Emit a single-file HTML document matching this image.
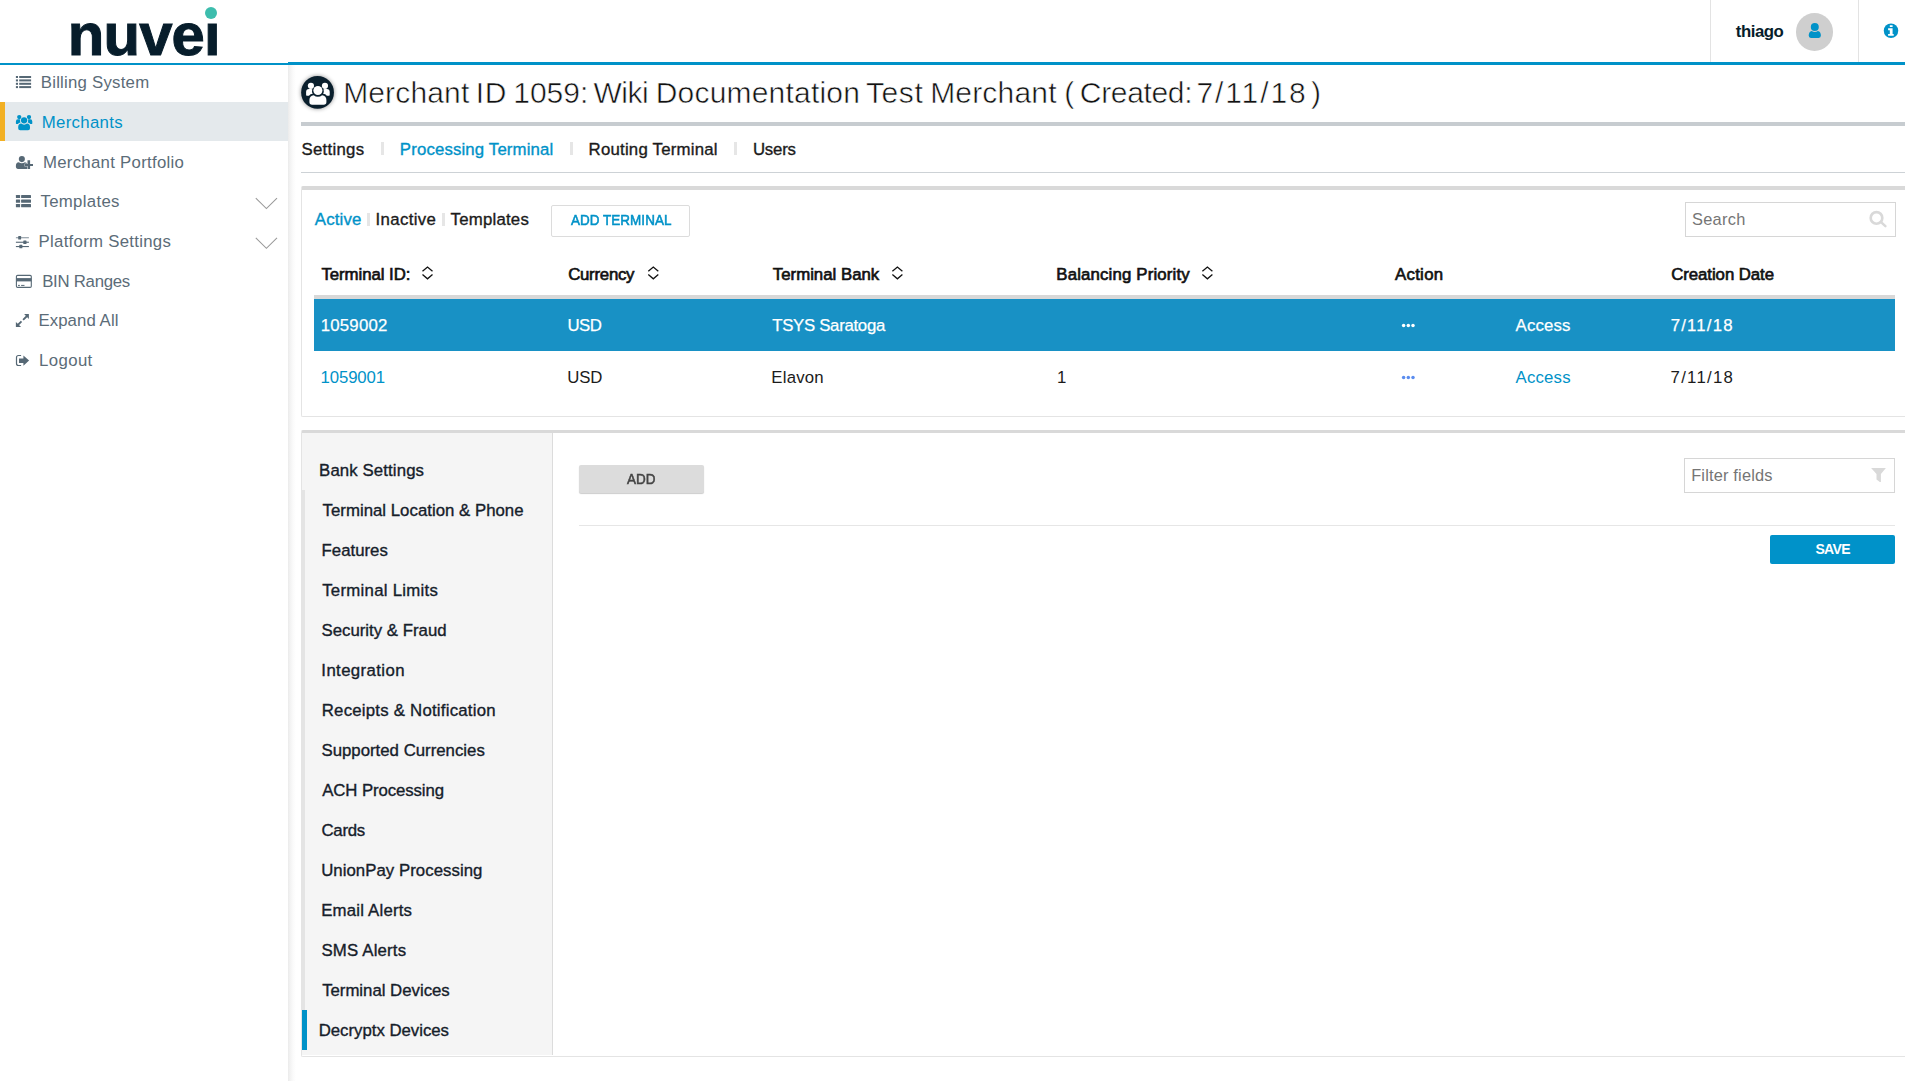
<!DOCTYPE html>
<html lang="en">
<head>
<meta charset="utf-8">
<title>Merchant ID 1059 - Processing Terminal</title>
<style>
*{box-sizing:border-box;margin:0;padding:0}
html,body{width:1905px;height:1081px;overflow:hidden;background:#fff}
body{font-family:"Liberation Sans",Arial,sans-serif;color:#1b1b1b;position:relative}
h1{font:inherit}
a{color:inherit;text-decoration:none}
.abs{position:absolute}
.t{position:absolute;white-space:nowrap;height:24px;line-height:24px}
svg{position:absolute;display:block;overflow:visible}

/* ---------- header ---------- */
#hdr-line-l{left:0;top:63px;width:288px;height:2px;background:#0092c8}
#hdr-line-r{left:288px;top:62px;width:1617px;height:3px;background:#0092c8}
#logo{left:67.8px;top:-0.5px;height:70px;line-height:70px;font-size:59.8px;font-weight:700;color:#071d2b;letter-spacing:-.85px;-webkit-text-stroke:1px #071d2b}
#logo-mask{left:203px;top:2px;width:18px;height:18.500px;background:#fff}
#logo-dot{left:205.3px;top:6.6px;width:12px;height:12px;border-radius:50%;background:#3dbdad}
.vsep{top:0;width:1px;height:62px;background:#e3e3e3}
.un{font-size:16.8px;font-weight:700;color:#071d2b}
#avatar{left:1796px;top:12.900px;width:37.2px;height:37.8px;border-radius:50%;background:#cfcfcf}

/* ---------- sidebar ---------- */
#side-shadow{left:288px;top:65px;width:8px;height:1016px;background:linear-gradient(90deg,#ebebeb 0,#f3f3f3 28%,#fbfbfb 65%,#fff 100%)}
#side-active{left:0;top:102px;width:288px;height:39px;background:#e4e9ec}
#side-bar{left:0;top:102px;width:5px;height:39px;background:#f2b024}
.sm{font-size:16.8px;color:#5b6c78}
.sm.on{color:#0092c8}

/* ---------- main ---------- */
.title{height:40px;line-height:40px;font-size:30px;color:#111;-webkit-text-stroke:.55px #fff}
#title-line{left:301px;top:122px;width:1604px;height:3.5px;background:#c7ccd0}
.tab{font-size:16.8px;color:#1b1b1b;-webkit-text-stroke:.35px currentColor}
.sep{width:3px;height:13px;background:#e6e6e6}
#tab-line{left:301px;top:172px;width:1604px;height:1px;background:#cdd2d6}

.panel{border:1px solid #e4e4e4;border-top:3px solid #d9d9d9;border-right:0;background:#fff;border-radius:2px 0 0 2px}
#p1{left:301px;top:186px;width:1604px;height:231px;border-top-width:4px}
#p2{left:301px;top:430px;width:1604px;height:627px}

/* ---------- panel 1 ---------- */
#addterm{left:551px;top:205px;width:139px;height:31.500px;border:1px solid #dcdcdc;border-radius:2px;background:#fff}
.btn-t{font-size:14.8px;-webkit-text-stroke:.55px currentColor;transform:scaleX(.91);transform-origin:0 50%}
#search{left:1685px;top:202px;width:211px;height:35px;border:1px solid #d6d6d6;background:#fff}
.ph{font-size:16.4px;color:#757575}
.th{font-size:16.8px;color:#111;-webkit-text-stroke:.65px currentColor}
#th-line{left:314px;top:295px;width:1581px;height:4px;background:#d8d8d8}
#row-sel{left:314px;top:299px;width:1581px;height:51.500px;background:#1891c5}
.td{font-size:16.8px;color:#1b1b1b}
.tdw{font-size:16.8px;color:#fff;-webkit-text-stroke:.25px currentColor}

/* ---------- panel 2 ---------- */
#sub-bg{left:302px;top:433px;width:250px;height:622px;background:#f5f5f5}
#sub-border{left:552px;top:433px;width:1px;height:622px;background:#dcdcdc}
#sub-strip{left:302px;top:490px;width:3px;height:520px;background:#e4e4e4}
#sub-on{left:302px;top:1010px;width:5px;height:40px;background:#0092c8}
.sub{font-size:16.8px;color:#15202a;-webkit-text-stroke:.35px currentColor}
#add{left:579px;top:465px;width:125px;height:28px;background:#dcdcdc;border-radius:2px;box-shadow:0 1px 1px rgba(0,0,0,.2)}
#filter{left:1684px;top:458px;width:211px;height:35px;border:1px solid #d6d6d6;background:#fff}
#hr{left:579px;top:525px;width:1316px;height:1px;background:#e6e6e6}
#save{left:1770px;top:535px;width:125px;height:29px;background:#0092c9;border-radius:2px}
.save-t{font-size:14px;font-weight:700;color:#fff}
.blue{color:#0092c8}
.w{color:#fff}
</style>
</head>
<body>
<!-- header -->
<div class="abs" id="hdr-line-l"></div>
<div class="abs" id="hdr-line-r"></div>
<div class="t" id="logo">nuvei</div>
<div class="abs" id="logo-mask"></div>
<div class="abs" id="logo-dot"></div>
<div class="abs vsep" style="left:1710px"></div>
<div class="abs vsep" style="left:1858px"></div>
<div class="abs" id="avatar"></div>
<!-- sidebar -->
<div class="abs" id="side-shadow"></div>
<div class="abs" id="side-active"></div>
<div class="abs" id="side-bar"></div>
<!-- main -->
<div class="abs" id="title-line"></div>
<div class="abs sep" style="left:381px;top:142.3px"></div>
<div class="abs sep" style="left:570px;top:142.3px"></div>
<div class="abs sep" style="left:733.6px;top:142.3px"></div>
<div class="abs" id="tab-line"></div>
<div class="abs panel" id="p1"></div>
<div class="abs panel" id="p2"></div>
<div class="abs sep" style="left:367px;top:212.5px"></div>
<div class="abs sep" style="left:442px;top:212.5px"></div>
<div class="abs" id="addterm"></div>
<div class="abs" id="search"></div>
<div class="abs" id="th-line"></div>
<div class="abs" id="row-sel"></div>
<div class="abs" id="sub-bg"></div>
<div class="abs" id="sub-border"></div>
<div class="abs" id="sub-strip"></div>
<div class="abs" id="sub-on"></div>
<div class="abs" id="add"></div>
<div class="abs" id="filter"></div>
<div class="abs" id="hr"></div>
<div class="abs" id="save"></div>

<!-- text -->
<header id="topbar">
<span class="t un" style="left:1735.80px;top:19.75px;letter-spacing:-0.459px">thiago</span>
</header>
<nav id="sidebar">
<a class="t sm" style="left:40.77px;top:70.75px;letter-spacing:0.229px">Billing System</a>
<a class="t sm on" style="left:41.83px;top:110.75px;letter-spacing:0.296px">Merchants</a>
<a class="t sm" style="left:42.94px;top:150.75px;letter-spacing:0.285px">Merchant Portfolio</a>
<a class="t sm" style="left:40.43px;top:189.75px;letter-spacing:0.324px">Templates</a>
<a class="t sm" style="left:38.61px;top:229.75px;letter-spacing:0.274px">Platform Settings</a>
<a class="t sm" style="left:42.14px;top:269.75px;letter-spacing:-0.261px">BIN Ranges</a>
<a class="t sm" style="left:38.43px;top:308.75px;letter-spacing:0.078px">Expand All</a>
<a class="t sm" style="left:39.11px;top:348.75px;letter-spacing:0.370px">Logout</a>
</nav>
<main id="content">
<h1 id="page-title">
<span class="t title" style="left:343.13px;top:72.75px;letter-spacing:0.153px">Merchant</span>
<span class="t title" style="left:475.64px;top:72.75px;letter-spacing:0.674px">ID</span>
<span class="t title" style="left:513.19px;top:72.75px;letter-spacing:0.018px">1059:</span>
<span class="t title" style="left:593.38px;top:72.75px;letter-spacing:-0.482px">Wiki</span>
<span class="t title" style="left:655.68px;top:72.75px;letter-spacing:0.206px">Documentation</span>
<span class="t title" style="left:865.94px;top:72.75px;letter-spacing:0.601px">Test</span>
<span class="t title" style="left:930.13px;top:72.75px;letter-spacing:0.185px">Merchant</span>
<span class="t title" style="left:1064.13px;top:72.75px;letter-spacing:0.100px">(</span>
<span class="t title" style="left:1079.84px;top:72.75px;letter-spacing:-0.342px">Created:</span>
<span class="t title" style="left:1196.51px;top:72.75px;letter-spacing:1.879px">7/11/18</span>
<span class="t title" style="left:1311.04px;top:72.75px;letter-spacing:0.100px">)</span>
</h1>
<nav id="merchant-tabs">
<a class="t tab" style="left:301.51px;top:137.75px;letter-spacing:0.280px">Settings</a>
<a class="t tab blue" style="left:399.82px;top:137.75px;letter-spacing:0.151px">Processing Terminal</a>
<a class="t tab" style="left:588.55px;top:137.75px;letter-spacing:0.225px">Routing Terminal</a>
<a class="t tab" style="left:752.94px;top:137.75px;letter-spacing:-0.189px">Users</a>
</nav>
<section id="terminals">
<a class="t tab blue" style="left:314.79px;top:207.75px;letter-spacing:0.185px">Active</a>
<a class="t tab" style="left:375.61px;top:207.75px;letter-spacing:0.330px">Inactive</a>
<a class="t tab" style="left:450.53px;top:207.75px;letter-spacing:0.223px">Templates</a>
<a class="t btn-t blue" style="left:570.59px;top:208.25px;letter-spacing:0.041px">ADD TERMINAL</a>
<span class="t ph" style="left:1691.96px;top:207.25px;letter-spacing:0.298px">Search</span>
<div class="t th" style="left:321.44px;top:262.75px;letter-spacing:-0.050px">Terminal ID:</div>
<div class="t th" style="left:568.17px;top:262.75px;letter-spacing:-0.247px">Currency</div>
<div class="t th" style="left:772.82px;top:262.75px;letter-spacing:0.006px">Terminal Bank</div>
<div class="t th" style="left:1056.27px;top:262.75px;letter-spacing:0.170px">Balancing Priority</div>
<div class="t th" style="left:1394.95px;top:262.75px;letter-spacing:0.309px">Action</div>
<div class="t th" style="left:1671.17px;top:262.75px;letter-spacing:-0.053px">Creation Date</div>
<div class="t tdw" style="left:320.79px;top:313.75px;letter-spacing:0.196px">1059002</div>
<div class="t tdw" style="left:567.39px;top:313.75px;letter-spacing:-0.443px">USD</div>
<div class="t tdw" style="left:772.20px;top:313.75px;letter-spacing:-0.294px">TSYS Saratoga</div>
<div class="t tdw" style="left:1515.60px;top:313.75px;letter-spacing:0.149px">Access</div>
<div class="t tdw" style="left:1670.79px;top:313.75px;letter-spacing:1.162px">7/11/18</div>
<div class="t td blue" style="left:320.52px;top:365.75px;letter-spacing:-0.126px">1059001</div>
<div class="t td" style="left:567.30px;top:365.75px;letter-spacing:-0.211px">USD</div>
<div class="t td" style="left:771.32px;top:365.75px;letter-spacing:0.198px">Elavon</div>
<div class="t td" style="left:1056.92px;top:365.75px;letter-spacing:0.100px">1</div>
<div class="t td blue" style="left:1515.57px;top:365.75px;letter-spacing:0.185px">Access</div>
<div class="t td" style="left:1670.62px;top:365.75px;letter-spacing:1.257px">7/11/18</div>
</section>
<section id="terminal-settings">
<a class="t sub" style="left:319.10px;top:458.75px;letter-spacing:0.111px">Bank Settings</a>
<a class="t sub" style="left:322.54px;top:498.75px;letter-spacing:0.018px">Terminal Location &amp; Phone</a>
<a class="t sub" style="left:321.54px;top:538.75px;letter-spacing:0.013px">Features</a>
<a class="t sub" style="left:322.14px;top:578.75px;letter-spacing:0.281px">Terminal Limits</a>
<a class="t sub" style="left:321.46px;top:618.75px;letter-spacing:0.009px">Security &amp; Fraud</a>
<a class="t sub" style="left:321.35px;top:658.75px;letter-spacing:0.383px">Integration</a>
<a class="t sub" style="left:321.75px;top:698.75px;letter-spacing:0.227px">Receipts &amp; Notification</a>
<a class="t sub" style="left:321.46px;top:738.75px;letter-spacing:0.007px">Supported Currencies</a>
<a class="t sub" style="left:322.25px;top:778.75px;letter-spacing:-0.101px">ACH Processing</a>
<a class="t sub" style="left:321.53px;top:818.75px;letter-spacing:-0.260px">Cards</a>
<a class="t sub" style="left:321.16px;top:858.75px;letter-spacing:0.044px">UnionPay Processing</a>
<a class="t sub" style="left:321.14px;top:898.75px;letter-spacing:0.208px">Email Alerts</a>
<a class="t sub" style="left:321.46px;top:938.75px;letter-spacing:0.180px">SMS Alerts</a>
<a class="t sub" style="left:322.14px;top:978.75px;letter-spacing:-0.011px">Terminal Devices</a>
<a class="t sub" style="left:318.68px;top:1018.75px;letter-spacing:-0.016px">Decryptx Devices</a>
<a class="t btn-t" style="left:626.82px;top:467.25px;letter-spacing:0.053px;color:#444">ADD</a>
<span class="t ph" style="left:1691.17px;top:463.25px;letter-spacing:0.175px">Filter fields</span>
<a class="t save-t" style="left:1815.39px;top:537.25px;letter-spacing:-0.648px">SAVE</a>
</section>
</main>

<!-- icons overlay -->
<svg id="icons" width="1905" height="1081" viewBox="0 0 1905 1081" style="left:0;top:0">
<defs>
<g id="users">
<circle cx="3.35" cy="2.2" r="2.15"/><circle cx="13.1" cy="2.2" r="2.15"/>
<path d="M0 8.600v-2.100q0-2.200 2-2.200h1.400q.500 0 .900.300q-.500 1.600.300 3.100q-1.700.200-2.600 1.300h-1.500q-.500 0-.500-.400z"/>
<path d="M16.400 8.600v-2.100q0-2.200-2-2.200h-1.400q-.500 0-.900.300q.500 1.600-.300 3.100q1.700.200 2.600 1.300h1.500q.500 0 .500-.400z"/>
<circle cx="8.200" cy="5.400" r="3.150"/>
<path d="M2.300 13.400v-1.300q0-3.100 3-3.400q1.300 1.100 2.900 1.100t2.900-1.100q3 .300 3 3.400v1.300q0 1.900-1.900 1.900h-8q-1.900 0-1.900-1.900z"/>
</g>
<g id="sort" fill="none" stroke="#111" stroke-width="1.300"><path d="M-5 -1.600L0 -5.900L5 -1.600M-5 1.600L0 5.900L5 1.600"/></g>
<g id="dots"><circle cx="-4.700" cy="0" r="1.750"/><circle cx="0" cy="0" r="1.750"/><circle cx="4.700" cy="0" r="1.750"/></g>
</defs>
<!-- billing: list -->
<g fill="#566875">
<rect x="15.900" y="76" width="2.100" height="2"/><rect x="19.200" y="76" width="11.900" height="2"/>
<rect x="15.900" y="79.400" width="2.100" height="2"/><rect x="19.200" y="79.400" width="11.900" height="2"/>
<rect x="15.900" y="82.800" width="2.100" height="2"/><rect x="19.200" y="82.800" width="11.900" height="2"/>
<rect x="15.900" y="86.100" width="2.100" height="2"/><rect x="19.200" y="86.100" width="11.900" height="2"/>
</g>
<!-- merchants: users -->
<use href="#users" x="15.900" y="114.900" fill="#0092c8"/>
<!-- merchant portfolio: user-plus -->
<g fill="#566875">
<circle cx="21.850" cy="159.100" r="3.050"/>
<path d="M15.900 167.100v-1.400q0-3.200 2.900-3.500q1.300 1 3.050 1t3.050-1q1.700.200 2.300 1.300v5.400h-9.400q-1.900 0-1.900-1.800z"/>
<path d="M27.500 160.300h2.600v3.800h2.900v1.900h-2.900v2.900h-2.600v-2.900h-3.000v-1.900h3.000z" stroke="#fff" stroke-width=".7" paint-order="stroke"/>
</g>
<!-- templates: th-list -->
<g fill="#566875">
<rect x="15.900" y="194.900" width="4.200" height="3.100" rx=".5"/><rect x="21.100" y="194.900" width="9.900" height="3.100" rx=".5"/>
<rect x="15.900" y="199.600" width="4.200" height="3.200" rx=".5"/><rect x="21.100" y="199.600" width="9.900" height="3.200" rx=".5"/>
<rect x="15.900" y="204.100" width="4.200" height="3.100" rx=".5"/><rect x="21.100" y="204.100" width="9.900" height="3.100" rx=".5"/>
</g>
<!-- platform settings: sliders -->
<g fill="#566875">
<rect x="15.900" y="237.250" width="13" height="1" opacity=".75"/><rect x="18.200" y="236" width="2.900" height="3.500" rx=".6"/>
<rect x="15.900" y="241.700" width="13" height="1.100"/><rect x="23.300" y="240.500" width="3.200" height="3.500" rx=".6"/>
<rect x="15.900" y="246" width="13" height="1.100"/><rect x="19.300" y="244.800" width="3.100" height="3.500" rx=".6"/>
</g>
<!-- bin ranges: credit card -->
<g fill="#566875">
<rect x="16.400" y="275.400" width="14.900" height="12" rx="1.200" fill="none" stroke="#566875" stroke-width="1.100"/>
<rect x="16.400" y="278.100" width="14.900" height="3.300"/>
<rect x="18" y="284.900" width="1.900" height="1"/><rect x="21.100" y="284.900" width="3.400" height="1"/>
</g>
<!-- expand all -->
<g fill="#566875" stroke="#566875">
<path d="M24.100 314.100h4.800v4.800z" stroke="none"/>
<path d="M15.900 322.100v4.800h5.200z" stroke="none"/>
<path d="M27 316l-3.900 3.900M17.800 325l3.700-3.700" stroke-width="1.800" fill="none"/>
</g>
<!-- logout -->
<g fill="#566875">
<path d="M21.100 355.500h-2.600q-2 0-2 2v6q0 2 2 2h2.600" fill="none" stroke="#566875" stroke-width="1.200"/>
<path d="M19 358.500h4.400v-2.900l5.700 5l-5.700 5.200v-2.900h-4.400z"/>
</g>
<!-- chevrons -->
<g fill="none" stroke="#9a9a9a" stroke-width="1.100">
<path d="M255.800 198.200l10.600 10.400l10.600-10.400"/>
<path d="M255.800 237.900l10.600 10.400l10.600-10.400"/>
</g>
<!-- title icon -->
<circle cx="317.550" cy="92.400" r="16.400" fill="#0a1f2d" style="filter:drop-shadow(0 0 2px rgba(0,0,0,.45))"/>
<use href="#users" transform="translate(306.100 82.700) scale(1.440)" fill="#fff"/>
<!-- avatar user -->
<g fill="#0092c8">
<circle cx="1814.800" cy="27.100" r="4"/>
<path d="M1808.700 35.600q0-4 3-4.700q1.300 1.100 3.100 1.100t3.100-1.100q3 .700 3 4.700q0 2.300-2.200 2.300h-7.800q-2.200 0-2.200-2.300z"/>
</g>
<!-- info -->
<circle cx="1891" cy="30.750" r="7.250" fill="#0092c8"/>
<path d="M1889.800 25.200h2.800v1.900h-2.800zM1888.100 28.200h4.500v5.700h1.100v1.800h-5.600v-1.800h1.700v-3.700h-1.700z" fill="#fff"/>
<!-- sort icons -->
<use href="#sort" x="427.500" y="272.950"/>
<use href="#sort" x="653.300" y="272.950"/>
<use href="#sort" x="897.400" y="272.950"/>
<use href="#sort" x="1207.400" y="272.950"/>
<!-- ellipsis -->
<use href="#dots" x="1408.300" y="325.600" fill="#fff"/>
<use href="#dots" x="1408.300" y="377.400" fill="#5b8def"/>
<!-- search -->
<g fill="none" stroke="#d9d9d9">
<circle cx="1876.500" cy="217.900" r="5.800" stroke-width="2.650"/>
<path d="M1881 222.200l4.400 4" stroke-width="2.500" stroke-linecap="round"/>
</g>
<!-- filter -->
<path d="M1871.100 468.100h14.800l-5 5.950v7.900l-1.100.15l-3.300-2.700v-5.350z" fill="#d9d9d9"/>
</svg>

</body>
</html>
